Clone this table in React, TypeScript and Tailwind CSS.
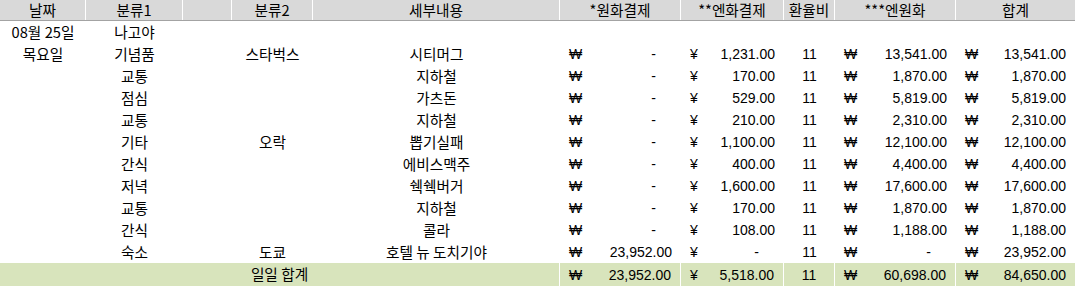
import React from "react"

type Row = {
	date?: string
	cat1?: string
	cat2?: string
	detail?: string
	krw?: string
	jpy?: string
	rate?: string
	conv?: string
	total?: string
}

const rows: Row[] = [
	{ date: "08월 25일", cat1: "나고야" },
	{ date: "목요일", cat1: "기념품", cat2: "스타벅스", detail: "시티머그", krw: "-", jpy: "1,231.00", rate: "11", conv: "13,541.00", total: "13,541.00" },
	{ cat1: "교통", detail: "지하철", krw: "-", jpy: "170.00", rate: "11", conv: "1,870.00", total: "1,870.00" },
	{ cat1: "점심", detail: "가츠돈", krw: "-", jpy: "529.00", rate: "11", conv: "5,819.00", total: "5,819.00" },
	{ cat1: "교통", detail: "지하철", krw: "-", jpy: "210.00", rate: "11", conv: "2,310.00", total: "2,310.00" },
	{ cat1: "기타", cat2: "오락", detail: "뽑기실패", krw: "-", jpy: "1,100.00", rate: "11", conv: "12,100.00", total: "12,100.00" },
	{ cat1: "간식", detail: "에비스맥주", krw: "-", jpy: "400.00", rate: "11", conv: "4,400.00", total: "4,400.00" },
	{ cat1: "저녁", detail: "쉑쉑버거", krw: "-", jpy: "1,600.00", rate: "11", conv: "17,600.00", total: "17,600.00" },
	{ cat1: "교통", detail: "지하철", krw: "-", jpy: "170.00", rate: "11", conv: "1,870.00", total: "1,870.00" },
	{ cat1: "간식", detail: "콜라", krw: "-", jpy: "108.00", rate: "11", conv: "1,188.00", total: "1,188.00" },
	{ cat1: "숙소", cat2: "도쿄", detail: "호텔 뉴 도치기야", krw: "23,952.00", jpy: "-", rate: "11", conv: "-", total: "23,952.00" },
]

const grid = "grid grid-cols-[86px_97px_49px_81px_247px_121px_103px_51px_121px_119px]"
const kr = "font-['Noto_Sans_CJK_KR',sans-serif] text-[14.67px]"
const num = "font-['Liberation_Sans','Noto_Sans_CJK_KR',sans-serif] text-[14px]"

function Money({ sym, val, sep }: { sym: string; val?: string; sep?: boolean }) {
	if (!val) return <div />
	return (
		<div className={`flex items-center justify-between pl-[9px] ${val === "-" ? "pr-[25px]" : "pr-[9px]"} ${num} ${sep ? "border-r border-white" : ""}`}>
			<span>{sym}</span>
			<span>{val}</span>
		</div>
	)
}

export default function App() {
	return (
		<div className="w-[1075px] h-[286px] bg-white text-black overflow-hidden leading-none">
			<div className={`${grid} h-[21px] bg-[#d9d9d9] border-b border-[#a3a3a3] ${kr}`}>
				{["날짜", "분류1", "", "분류2", "세부내용", "*원화결제", "**엔화결제", "환율비", "***엔원화", "합계"].map((h, i) => (
					<div key={i} className={`flex items-center justify-center ${i < 9 ? "border-r border-white" : ""}`}>{h}</div>
				))}
			</div>
			{rows.map((r, i) => (
				<div key={i} className={`${grid} h-[22px]`}>
					<div className={`flex items-center justify-center ${kr}`}>{r.date}</div>
					<div className={`flex items-center justify-center ${kr}`}>{r.cat1}</div>
					<div />
					<div className={`flex items-center justify-center ${kr}`}>{r.cat2}</div>
					<div className={`flex items-center justify-center ${kr}`}>{r.detail}</div>
					<Money sym="₩" val={r.krw} />
					<Money sym="¥" val={r.jpy} />
					<div className={`flex items-center justify-center ${num}`}>{r.rate}</div>
					<Money sym="₩" val={r.conv} />
					<Money sym="₩" val={r.total} />
				</div>
			))}
			<div className={`${grid} h-[23px] bg-[#d8e4bc]`}>
				<div className={`col-span-5 flex items-center justify-center border-r border-white ${kr}`}>일일 합계</div>
				<Money sym="₩" val="23,952.00" sep />
				<Money sym="¥" val="5,518.00" sep />
				<div className={`flex items-center justify-center border-r border-white ${num}`}>11</div>
				<Money sym="₩" val="60,698.00" sep />
				<Money sym="₩" val="84,650.00" />
			</div>
		</div>
	)
}
